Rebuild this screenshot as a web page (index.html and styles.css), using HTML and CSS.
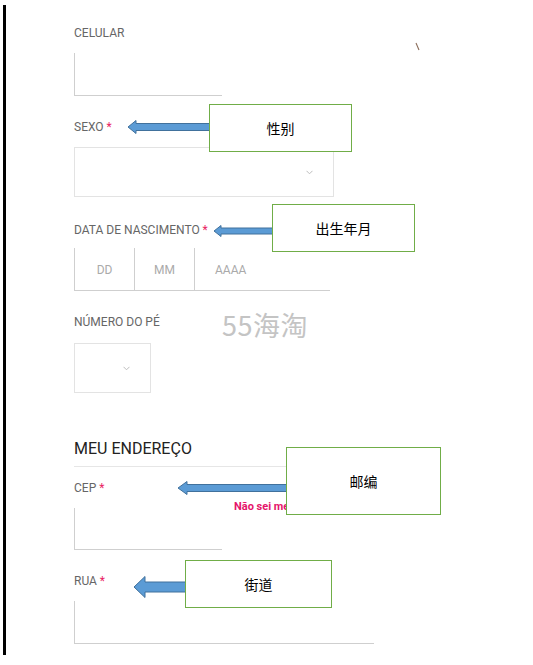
FILE: index.html
```html
<!DOCTYPE html>
<html lang="pt">
<head>
<meta charset="utf-8">
<link rel="stylesheet" href="styles.css">
</head>
<body>
<div class="page">
  <form class="form">
    <div class="field">
      <label class="label">CELULAR</label>
      <div class="input input-short"></div>
    </div>
    <div class="field">
      <label class="label">SEXO <span class="req">*</span></label>
      <div class="select select-wide"><svg class="chev" width="7" height="5" viewBox="0 0 7 5"><path d="M0.5 0.8 L3.5 3.8 L6.5 0.8" fill="none" stroke="#bdbdbd" stroke-width="1"/></svg></div>
    </div>
    <div class="field">
      <label class="label label-date">DATA DE NASCIMENTO <span class="req">*</span></label>
      <div class="date">
        <span class="part part-dd">DD</span>
        <span class="part part-mm">MM</span>
        <span class="part part-yy">AAAA</span>
      </div>
    </div>
    <div class="field">
      <label class="label">NÚMERO DO PÉ</label>
      <div class="select select-small"><svg class="chev" width="7" height="5" viewBox="0 0 7 5"><path d="M0.5 0.8 L3.5 3.8 L6.5 0.8" fill="none" stroke="#bdbdbd" stroke-width="1"/></svg></div>
    </div>
    <h2 class="section">MEU ENDEREÇO</h2>
    <div class="field field-cep">
      <label class="label">CEP <span class="req">*</span></label>
      <a class="cep-link">Não sei meu CEP</a>
      <div class="input input-short input-cep"></div>
    </div>
    <div class="field">
      <label class="label">RUA <span class="req">*</span></label>
      <div class="input input-long"></div>
    </div>
  </form>

  <div class="watermark">55海淘</div>
  <svg class="tick" width="6" height="10" viewBox="0 0 6 10"><path d="M1 1 L4 8" stroke="#8a6d5a" stroke-width="1.1" fill="none"/></svg>

  <svg class="arrow a1" width="86" height="16" viewBox="0 0 86 16"><path d="M1 8 L9 1.5 L9 4.5 L85 4.5 L85 11.5 L9 11.5 L9 14.5 Z" fill="#5b9bd5" stroke="#41719c" stroke-width="1"/></svg>
  <div class="note n1">性别</div>

  <svg class="arrow a2" width="62" height="14" viewBox="0 0 62 14"><path d="M1 7 L8 1.5 L8 4 L61 4 L61 10 L8 10 L8 12.5 Z" fill="#5b9bd5" stroke="#41719c" stroke-width="1"/></svg>
  <div class="note n2">出生年月</div>

  <svg class="arrow a3" width="116" height="16" viewBox="0 0 116 16"><path d="M1 8 L10 1.5 L10 4.5 L115 4.5 L115 11.5 L10 11.5 L10 14.5 Z" fill="#5b9bd5" stroke="#41719c" stroke-width="1"/></svg>
  <div class="note n3">邮编</div>

  <svg class="arrow a4" width="56" height="24" viewBox="0 0 56 24"><path d="M1 12 L12 1.5 L12 7 L55 7 L55 17 L12 17 L12 22.5 Z" fill="#5b9bd5" stroke="#41719c" stroke-width="1"/></svg>
  <div class="note n4">街道</div>
</div>
</body>
</html>
```

FILE: styles.css
```css
* { box-sizing: border-box; }
html, body { margin: 0; padding: 0; background: #fff; }
body {
  font-family: Roboto, "Noto Sans", "Liberation Sans", sans-serif;
  width: 533px;
  height: 665px;
  overflow: hidden;
}
.page {
  position: relative;
  margin: 5px 0 0 3px;
  height: 650px;
  border-left: 3px solid #000;
}
.form {
  padding: 21px 0 0 68px;
}
.field {
  display: flex;
  flex-direction: column;
  align-items: flex-start;
  margin-bottom: 24px;
}
.label {
  font-size: 12px;
  line-height: 14px;
  color: #666;
  margin-bottom: 13px;
}
.label-date { margin-top: 2px; margin-bottom: 11px; }
.req { color: #e91e63; }
.input {
  border-left: 1px solid #cfcfcf;
  border-bottom: 1px solid #cfcfcf;
  height: 43px;
}
.input-short { width: 148px; }
.input-cep { height: 42px; }
.input-long { width: 300px; }
.select {
  border: 1px solid #e3e3e3;
  height: 50px;
  position: relative;
}
.select-wide { width: 260px; }
.select-small { width: 77px; margin-top: 1px; }
.chev { position: absolute; top: 22px; right: 20px; }
.date {
  display: flex;
  width: 256px;
  height: 43px;
  border-bottom: 1px solid #cfcfcf;
  border-left: 1px solid #cfcfcf;
}
.part {
  display: flex;
  align-items: center;
  font-size: 12px;
  color: #aaa;
  height: 100%;
  padding-top: 2px;
}
.part-dd, .part-mm {
  width: 60px;
  justify-content: center;
  border-right: 1px solid #cfcfcf;
}
.part-yy { padding-left: 20px; }
.section {
  font-weight: 400;
  font-size: 16px;
  line-height: 20px;
  color: #222;
  margin: 46px 0 0 0;
  padding-bottom: 7px;
  border-bottom: 1px solid #e6e6e6;
  width: 300px;
}
.field-cep { position: relative; margin-top: 14px; }
.cep-link {
  position: absolute;
  left: 160px;
  top: 19px;
  font-size: 11px;
  font-weight: 700;
  color: #e5156b;
}
.watermark {
  position: absolute;
  left: 216px;
  top: 306px;
  font-size: 27px;
  line-height: 27px;
  color: #c4c4c4;
  font-family: "Noto Sans CJK SC", "Noto Sans", sans-serif;
  font-weight: 400;
  letter-spacing: 0.5px;
}
.tick { position: absolute; left: 409px; top: 37px; }
.arrow { position: absolute; }
.a1 { left: 121px; top: 114px; }
.a2 { left: 207px; top: 219px; }
.a3 { left: 171px; top: 475px; }
.a4 { left: 127px; top: 570px; }
.note {
  position: absolute;
  background: #fff;
  border: 1px solid #70ad47;
  display: flex;
  align-items: center;
  justify-content: center;
  font-family: "Noto Sans CJK SC", sans-serif;
  font-size: 14px;
  color: #000;
}
.n1 { left: 203px; top: 99px; width: 143px; height: 48px; }
.n2 { left: 266px; top: 199px; width: 143px; height: 48px; }
.n3 { left: 280px; top: 442px; width: 155px; height: 68px; }
.n4 { left: 179px; top: 555px; width: 147px; height: 48px; }
```
